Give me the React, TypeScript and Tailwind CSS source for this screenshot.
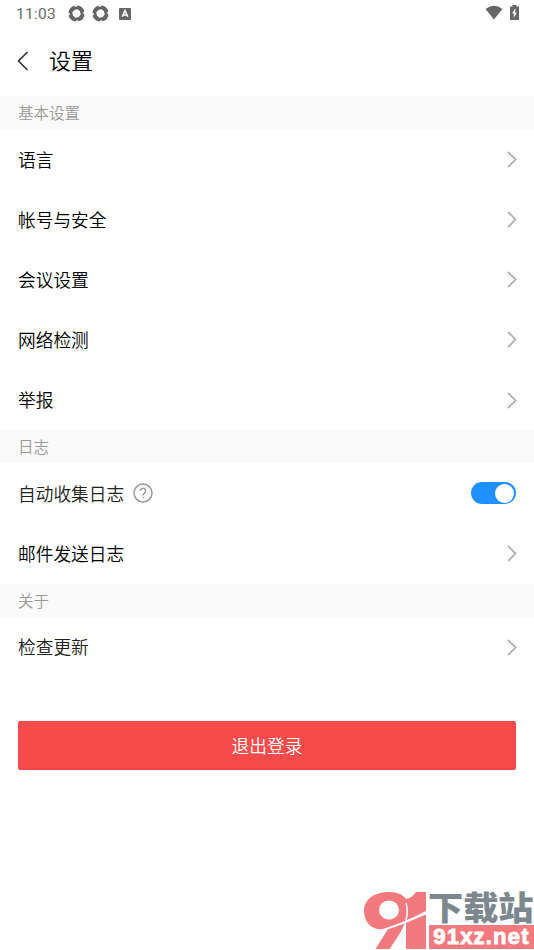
import { useState } from 'react';

interface Item {
  label: string;
  soft?: boolean;
}

const basic: Item[] = [
  { label: '语言' },
  { label: '帐号与安全' },
  { label: '会议设置' },
  { label: '网络检测' },
  { label: '举报' },
];

function Chevron() {
  return (
    <svg className="-mr-px" width="10" height="17" viewBox="0 0 10 17" fill="none" stroke="#b4b4b4" strokeWidth="1.8">
      <path d="M1 1l7.6 7.5L1 16" />
    </svg>
  );
}

function Shutter() {
  return (
    <svg width="17" height="17" viewBox="0 0 17 17" fill="#666">
      {[40, 130, 220, 310].map(a => (
        <path key={a} transform={`rotate(${a} 8.5 8.5)`} d="M4.600 1.300A8.200 8.200 0 0 1 13 1.700L12.800 6.800L9.800 4.600H3.500z" />
      ))}
    </svg>
  );
}

function SectionTitle({ children }: { children: string }) {
  return (
    <h2 className="h-[33.300px] flex items-center px-[18px] bg-[#fafafa] text-[15.500px] text-[#999]">{children}</h2>
  );
}

function Row({ label, soft }: Item) {
  return (
    <button className="w-full h-[60.170px] flex items-center justify-between px-[18px] text-left">
      <span className={soft ? 'pb-[0.600px] text-[#222]' : 'pb-[0.600px] text-black'}>{label}</span>
      <Chevron />
    </button>
  );
}

export default function App() {
  const [autoLog, setAutoLog] = useState(true);

  return (
    <div className="relative w-[534px] h-[950px] overflow-hidden bg-white text-[17.700px] font-[350] font-['Noto_Sans_CJK_SC',sans-serif]">
      <div className="h-7 flex items-center justify-between pl-4 pr-[15px]">
        <div className="flex items-center pb-px">
          <span className="w-[51.500px] pt-[3px] text-[15.500px] font-normal text-[#6b6b6b] font-[Roboto,sans-serif] tracking-[0.300px]">11:03</span>
          <Shutter />
          <div className="w-[7.500px]" />
          <Shutter />
          <svg className="ml-[10px]" width="12" height="12" viewBox="0 0 12 12">
            <rect width="12" height="12" rx="1" fill="#666" />
            <path d="M3.200 8.800L6 2.500L8.800 8.800M4.200 7h3.600" fill="none" stroke="#fff" strokeWidth="1.400" />
          </svg>
        </div>
        <div className="flex items-center gap-[7px] pb-[3px]">
          <svg width="18" height="15" viewBox="0 0 18 15">
            <path d="M.5 4Q9-2.500 17.500 4L9 14.500z" fill="#666" />
          </svg>
          <svg width="9" height="15" viewBox="0 0 9 15">
            <path d="M2.500 0h4v1.500H9V15H0V1.500h2.500z" fill="#666" />
            <path d="M5.500 3L2 8.500h2L3.500 13L7 7.500H5z" fill="#fff" />
          </svg>
        </div>
      </div>

      <header className="h-[68px] flex items-center pl-[17px] pb-0.5">
        <svg width="12" height="20" viewBox="0 0 12 20" fill="none" stroke="#333" strokeWidth="1.600">
          <path d="M10.500 1L1.500 10l9 9" />
        </svg>
        <h1 className="ml-[20px] pb-[3px] text-[22px] text-black">设置</h1>
      </header>

      <SectionTitle>基本设置</SectionTitle>
      {basic.map(item => <Row key={item.label} {...item} />)}

      <SectionTitle>日志</SectionTitle>
      <div className="h-[60.170px] flex items-center px-[18px]">
        <span className="text-[#222]">自动收集日志</span>
        <svg className="ml-[9px]" width="20" height="20" viewBox="0 0 20 20" fill="none" stroke="#999" strokeWidth="1.500">
          <circle cx="10" cy="10" r="9" />
          <path d="M7.400 8a2.600 2.600 0 1 1 4.300 1.900C10.500 10.700 10 11.100 10 12.400M10 13.700v1.500" />
        </svg>
        <button role="switch" aria-checked={autoLog} onClick={() => setAutoLog(!autoLog)}
          className={`ml-auto w-[45px] h-[22px] p-0.5 rounded-full flex items-center ${autoLog ? 'justify-end bg-[#1e90ff]' : 'justify-start bg-gray-300'}`}>
          <span className="size-[19px] shrink-0 rounded-full bg-white" />
        </button>
      </div>
      <Row label="邮件发送日志" />

      <SectionTitle>关于</SectionTitle>
      <Row label="检查更新" soft />

      <div className="px-[18px] pt-[44px]">
        <button className="w-full h-[49px] rounded-xs bg-[#f54b4b] text-white">退出登录</button>
      </div>

      {/* site watermark */}
      <div className="absolute right-0 bottom-0 w-[171px] h-[60px] flex">
        <svg className="shrink-0" width="64" height="60" viewBox="0 0 64 60">
          <path d="M26 2C35 2 40 5 43 9C48 8 51 5 53 2H63V59H43V29C40 40 34 48 26.500 59H12.500L25 39C10 42 1 33 1 21C1 9 12 2 26 2z" fill="#f27a7e" />
          <ellipse cx="26" cy="20" rx="10" ry="9.500" fill="#fff" />
          <path d="M43 13Q45.500 21 43 30" fill="none" stroke="#fff" strokeWidth="1.500" />
          <path d="M17 40Q40 33 63 21V24.500Q40 35 17 42z" fill="#fff" />
        </svg>
        <div className="w-[107px] flex flex-col">
          <div className="h-[35px] pl-px text-[35.200px] leading-[34px] font-black text-[#7c878e] whitespace-nowrap origin-top scale-y-[0.940]">下载站</div>
          <div className="h-[24px] ml-0.5 flex items-center justify-center bg-[#f27a7e] text-white">
            <span className="text-[22px] leading-[24px] font-bold tracking-[1.200px] font-['Liberation_Sans',sans-serif] [-webkit-text-stroke:0.900px_white]">91xz.net</span>
          </div>
        </div>
      </div>
    </div>
  );
}
